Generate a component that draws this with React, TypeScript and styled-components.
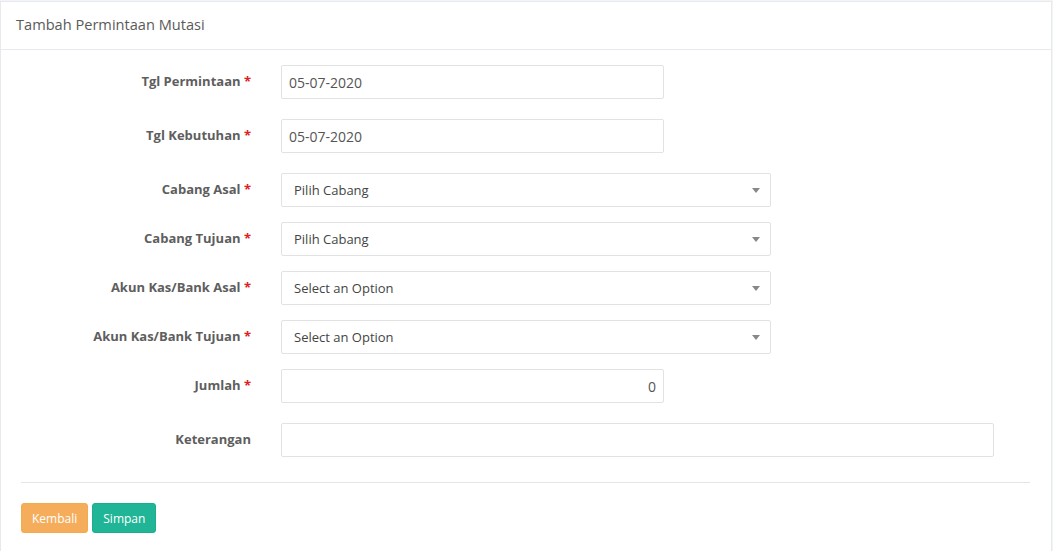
import React from 'react';
import styled, { createGlobalStyle } from 'styled-components';

const GlobalStyle = createGlobalStyle`
  html, body {
    margin: 0;
    padding: 0;
    background: #f3f4f6;
    font-family: "Open Sans", "Liberation Sans", sans-serif;
  }
  * { box-sizing: border-box; }
`;

const Panel = styled.div`
  margin: 1px 1px 0 0;
  min-height: 560px;
  background: #fff;
  border: 1px solid #e6e9ed;
`;

const PanelHeader = styled.div`
  height: 48px;
  display: flex;
  align-items: center;
  padding: 0 15px 3px;
  border-bottom: 1px solid #e6e9ed;
`;

const Title = styled.h2`
  margin: 0;
  font-size: 14.6px;
  font-weight: 400;
  color: #5a5a5a;
`;

const Form = styled.form`
  padding: 15px 21px 0 20px;
`;

const Row = styled.div<{ $gap: number }>`
  display: grid;
  grid-template-columns: 230px 1fr;
  column-gap: 30px;
  align-items: center;
  margin-bottom: ${({ $gap }) => $gap}px;
`;

const Label = styled.label`
  text-align: right;
  font-size: 13px;
  font-weight: 700;
  color: #5e5e5e;
  padding-bottom: 2px;
`;

const Required = styled.span`
  color: #e02020;
`;

const Input = styled.input<{ $width: number; $align?: string }>`
  width: ${({ $width }) => $width}px;
  height: 34px;
  padding: 6px 7px;
  border: 1px solid #e2e2e2;
  border-radius: 2px;
  font-family: inherit;
  font-size: 14px;
  color: #555;
  text-align: ${({ $align }) => $align || 'left'};
  outline: none;
`;

const Select = styled.div`
  width: 490px;
  height: 34px;
  display: flex;
  align-items: center;
  justify-content: space-between;
  padding: 0 10px 0 12px;
  border: 1px solid #e2e2e2;
  border-radius: 2px;
  font-size: 13px;
  color: #444;
`;

const Arrow = styled.span`
  width: 0;
  height: 0;
  border-left: 4px solid transparent;
  border-right: 4px solid transparent;
  border-top: 5px solid #888;
`;

const Divider = styled.hr`
  border: 0;
  border-top: 1px solid #e5e5e5;
  margin: 0 0 20px;
`;

const Actions = styled.div`
  display: flex;
  gap: 4px;
`;

const Button = styled.button<{ $variant: 'warning' | 'success' }>`
  height: 30px;
  padding: 0 10px;
  border: 1px solid ${({ $variant }) => ($variant === 'warning' ? '#f0ad4e' : '#1aae91')};
  border-radius: 3px;
  background: ${({ $variant }) => ($variant === 'warning' ? '#f5ad5c' : '#1fb596')};
  color: #fff;
  font-family: inherit;
  font-size: 12px;
`;

const App: React.FC = () => {
  return (
    <>
      <GlobalStyle />
      <Panel>
        <PanelHeader>
          <Title>Tambah Permintaan Mutasi</Title>
        </PanelHeader>
        <Form onSubmit={(e) => e.preventDefault()}>
          <Row $gap={20}>
            <Label>Tgl Permintaan <Required>*</Required></Label>
            <Input $width={383} defaultValue="05-07-2020" />
          </Row>
          <Row $gap={20}>
            <Label>Tgl Kebutuhan <Required>*</Required></Label>
            <Input $width={383} defaultValue="05-07-2020" />
          </Row>
          <Row $gap={15}>
            <Label>Cabang Asal <Required>*</Required></Label>
            <Select>Pilih Cabang<Arrow /></Select>
          </Row>
          <Row $gap={15}>
            <Label>Cabang Tujuan <Required>*</Required></Label>
            <Select>Pilih Cabang<Arrow /></Select>
          </Row>
          <Row $gap={15}>
            <Label>Akun Kas/Bank Asal <Required>*</Required></Label>
            <Select>Select an Option<Arrow /></Select>
          </Row>
          <Row $gap={15}>
            <Label>Akun Kas/Bank Tujuan <Required>*</Required></Label>
            <Select>Select an Option<Arrow /></Select>
          </Row>
          <Row $gap={20}>
            <Label>Jumlah <Required>*</Required></Label>
            <Input $width={383} $align="right" defaultValue="0" />
          </Row>
          <Row $gap={25}>
            <Label>Keterangan</Label>
            <Input $width={713} />
          </Row>
          <Divider />
          <Actions>
            <Button type="button" $variant="warning">Kembali</Button>
            <Button type="submit" $variant="success">Simpan</Button>
          </Actions>
        </Form>
      </Panel>
    </>
  );
};

export default App;
